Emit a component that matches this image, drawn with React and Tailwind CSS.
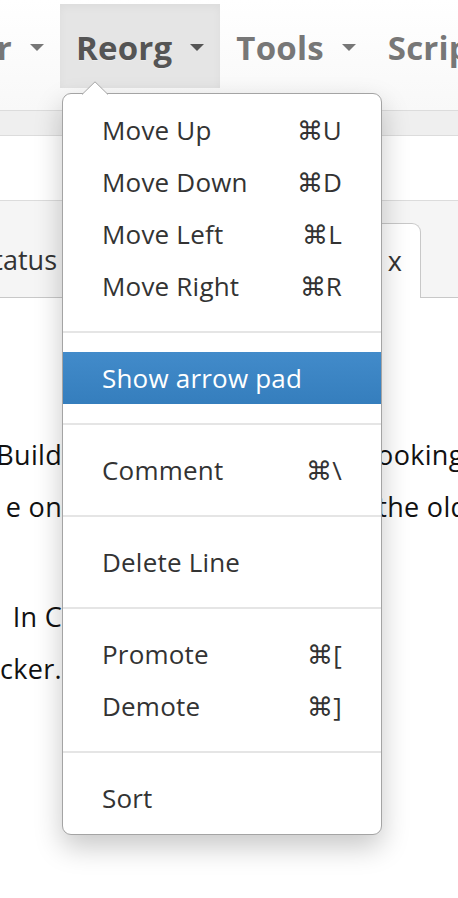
import React from 'react';

function Caret({ className = '' }) {
  return <span className={`inline-block h-0 w-0 border-x-[7px] border-t-[7px] border-x-transparent ${className}`} />;
}

function NavItem({ label, active }) {
  return (
    <div
      className={`flex h-[84px] shrink-0 items-center gap-[18px] px-4 pt-[3px] text-[33px] font-bold tracking-[0.2px] [text-shadow:0_1px_0_rgba(255,255,255,0.3)] ${
        active ? 'bg-[#e5e5e5] text-[#555] shadow-[inset_0_3px_9px_rgba(0,0,0,0.04)]' : 'text-[#777]'
      }`}
    >
      <span>{label}</span>
      <Caret className={active ? 'border-t-[#555]' : 'border-t-[#777]'} />
    </div>
  );
}

const groups = [
  [
    ['Move Up', '⌘U'],
    ['Move Down', '⌘D'],
    ['Move Left', '⌘L'],
    ['Move Right', '⌘R'],
  ],
  [['Show arrow pad', '', true]],
  [['Comment', '⌘\\']],
  [['Delete Line', '']],
  [
    ['Promote', '⌘['],
    ['Demote', '⌘]'],
  ],
  [['Sort', '']],
];

function Menu() {
  return (
    <div className="absolute left-[62px] top-[93px] w-[320px] rounded-[9px] border border-[#a4a4a4] bg-white py-[10px] shadow-[0_12px_28px_rgba(0,0,0,0.22)]">
      <svg className="absolute left-[19px] top-[-13px]" width="26" height="14" viewBox="0 0 26 14">
        <path d="M0 13.5 L13 0.8 L26 13.5" fill="white" stroke="#a4a4a4" strokeWidth="1" />
        <rect x="1" y="13" width="24" height="2" fill="white" />
      </svg>
      {groups.map((items, gi) => (
        <div key={gi}>
          {gi > 0 && <div className="my-[19px] h-[2px] bg-[#e5e5e5]" />}
          {items.map(([label, key, active]) => (
            <div
              key={label}
              className={`flex h-[52px] items-center justify-between px-[39px] text-[26px] tracking-[0.2px] ${
                active ? 'bg-linear-to-b from-[#428bca] to-[#357ebd] text-white' : 'text-[#333]'
              }`}
            >
              <span>{label}</span>
              <span>{key}</span>
            </div>
          ))}
        </div>
      ))}
    </div>
  );
}

function TextLine({ left, right }) {
  return (
    <div className="flex h-[52px] items-center whitespace-nowrap">
      <div className="flex w-[62px] shrink-0 justify-end overflow-hidden">
        <span>{left}</span>
      </div>
      <div className="w-[308px] shrink-0" />
      <div className="overflow-hidden">{right}</div>
    </div>
  );
}

export default function App() {
  return (
    <div className="relative h-[898px] w-[458px] overflow-hidden bg-white font-['Open_Sans',sans-serif]">
      <div className="flex h-[111px] items-start overflow-hidden border-b border-[#dcdcdc] bg-linear-to-b from-white to-[#f8f8f8] pt-[4px]">
        <div className="flex w-[60px] shrink-0 justify-end overflow-hidden">
          <NavItem label="Editor" />
        </div>
        <NavItem label="Reorg" active />
        <NavItem label="Tools" />
        <NavItem label="Script" />
      </div>
      <div className="h-[25px] border-b border-[#dcdcdc] bg-[#efefef]" />
      <div className="h-[65px] border-b border-[#dcdcdc] bg-white" />
      <div className="flex h-[97px] items-end border-b border-[#c8c8c8] bg-[#f5f5f5]">
        <div className="flex h-[74px] w-[57px] shrink-0 items-center justify-end overflow-hidden text-[27px] text-[#333]">
          <span className="whitespace-nowrap">Status</span>
        </div>
        <div className="w-[280px] shrink-0" />
        <div className="-mb-px flex h-[75px] w-[84px] shrink-0 items-center justify-end rounded-tr-[9px] border border-b-0 border-[#c8c8c8] bg-white pr-[18px] text-[27px] text-[#333]">
          <span className="whitespace-nowrap">x</span>
        </div>
      </div>
      <div className="pt-[131px] text-[27px] tracking-[0.3px] text-[#111]">
        <TextLine left="Build" right="looking" />
        <TextLine left="e on" right={'\u00a0the old'} />
        <div className="h-[58px]" />
        <TextLine left="In C" right="" />
        <TextLine left="cker." right="" />
      </div>
      <Menu />
    </div>
  );
}
